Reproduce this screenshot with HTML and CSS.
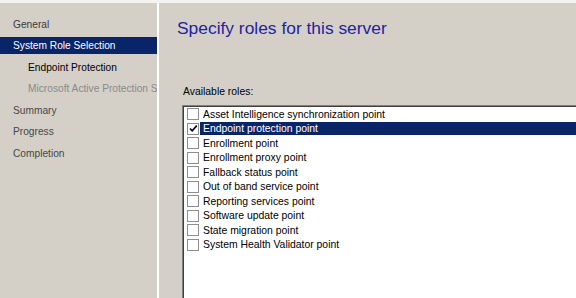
FILE: index.html
```html
<!DOCTYPE html>
<html lang="en">

<head>
    <meta charset="UTF-8">
    <title>Specify roles for this server</title>
    <link rel="stylesheet" href="styles.css">
</head>

<body>
    <div class="top-strip"></div>
    <div class="wizard">
        <ul class="steps">
            <li class="step done">General</li>
            <li class="step current">System Role Selection</li>
            <li class="step sub active">Endpoint Protection</li>
            <li class="step sub disabled">Microsoft Active Protection Service</li>
            <li class="step">Summary</li>
            <li class="step">Progress</li>
            <li class="step">Completion</li>
        </ul>
        <div class="separator"></div>
        <div class="page">
            <h1 class="page-title">Specify roles for this server</h1>
            <p class="roles-label">Available roles:</p>
            <ul class="role-list">
                <li class="role"><span class="check"></span><span class="role-name">Asset Intelligence synchronization point</span></li>
                <li class="role selected"><span class="check checked"><svg width="9" height="9" viewBox="0 0 9 9"><path d="M1 4.5 L3.2 6.8 L7.8 1.6" fill="none" stroke="#000" stroke-width="1.6"/></svg></span><span class="role-name">Endpoint protection point</span></li>
                <li class="role"><span class="check"></span><span class="role-name">Enrollment point</span></li>
                <li class="role"><span class="check"></span><span class="role-name">Enrollment proxy point</span></li>
                <li class="role"><span class="check"></span><span class="role-name">Fallback status point</span></li>
                <li class="role"><span class="check"></span><span class="role-name">Out of band service point</span></li>
                <li class="role"><span class="check"></span><span class="role-name">Reporting services point</span></li>
                <li class="role"><span class="check"></span><span class="role-name">Software update point</span></li>
                <li class="role"><span class="check"></span><span class="role-name">State migration point</span></li>
                <li class="role"><span class="check"></span><span class="role-name">System Health Validator point</span></li>
            </ul>
        </div>
    </div>
</body>

</html>
```

FILE: styles.css
```css
body,
div,
ul,
li,
h1,
p,
span {
    padding: 0;
    margin: 0;
}

li {
    list-style: none;
}

body {
    width: 576px;
    height: 298px;
    overflow: hidden;
    background: #d4d0c8;
    font-family: "Liberation Sans", Arial, sans-serif;
    font-size: 11px;
    color: #000;
}

.top-strip {
    height: 3px;
    background: #f4f3f0;
}

.wizard {
    display: flex;
    height: 295px;
}

.steps {
    width: 157px;
    flex: none;
    padding-top: 12.5px;
    display: flex;
    flex-direction: column;
    gap: 4.5px;
    overflow: hidden;
    font-size: 10.2px;
}

.step {
    height: 17px;
    line-height: 17px;
    padding-left: 13px;
    white-space: nowrap;
    overflow: hidden;
    color: #474747;
}

.step.done {
    color: #3a3a3a;
}

.step.current {
    background: #0a246a;
    color: #fff;
}

.step.sub {
    padding-left: 28px;
}

.step.active {
    color: #000;
}

.step.disabled {
    color: #8a8a8a;
}

.separator {
    width: 2px;
    flex: none;
    background: #fff;
}

.page {
    flex: 1;
    min-width: 0;
    padding: 15px 0 0 18px;
    overflow: hidden;
}

.page-title {
    font-size: 17.4px;
    font-weight: normal;
    line-height: 20px;
    color: #2323a0;
}

.roles-label {
    margin: 47px 0 0 6px;
    line-height: 13px;
    height: 20px;
    font-size: 10.4px;
}

.role-list {
    margin-left: 5px;
    margin-right: -6px;
    height: 200px;
    background: #fff;
    border-top: 1px solid #808080;
    border-left: 1px solid #808080;
    box-shadow: inset 1px 1px 0 #404040;
    padding: 1px 0 0 4px;
    font-size: 10.4px;
}

.role {
    height: 14.5px;
    display: flex;
    align-items: center;
}

.check {
    width: 10px;
    height: 10px;
    flex: none;
    border: 1px solid #8e8e8e;
    background: #fff;
    display: flex;
    align-items: center;
    justify-content: center;
}

.role-name {
    margin-left: 1px;
    padding: 0 3px;
    line-height: 13px;
    white-space: nowrap;
    color: #000;
}

.role.selected .role-name {
    flex: 1;
    background: #0a246a;
    color: #fff;
}
```
